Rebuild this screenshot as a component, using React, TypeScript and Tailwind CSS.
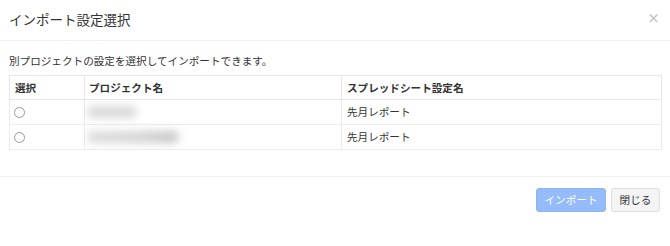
import React from 'react';

const rows = [
  { name: 'short', sheet: '先月レポート' },
  { name: 'long', sheet: '先月レポート' },
];

function BlurredName({ long }: { long: boolean }) {
  return (
    <div className="flex items-center h-full">
      <div
        className={`h-[12px] rounded-full blur-[4px] ${
          long ? 'w-[92px] bg-gradient-to-r from-[#dcdcdc] via-[#d6d6d6] to-[#c6c6c6]' : 'w-[50px] bg-[#d8d8d8]'
        }`}
      />
    </div>
  );
}

export default function App() {
  return (
    <div
      className="w-[670px] h-[246px] bg-white text-[#333]"
      style={{ fontFamily: '"Noto Sans CJK JP", "Noto Sans", sans-serif' }}
    >
      {/* Header */}
      <div className="h-[41px] flex items-center justify-between pl-[9px] pr-[10px] border-b border-[#efefef]">
        <h4 className="text-[13.5px] leading-none font-normal text-[#333]">インポート設定選択</h4>
        <span className="text-[13px] leading-none font-bold text-[#c4c4c4] -mt-[6px]">×</span>
      </div>

      {/* Body */}
      <div className="px-[9px] pt-[11px] pb-[26px]">
        <p className="text-[10.6px] leading-[17px] text-[#333]">別プロジェクトの設定を選択してインポートできます。</p>
        <table className="mt-[6px] w-[652px] border-collapse border border-[#e8e8e8] text-[10.6px] table-fixed">
          <colgroup>
            <col className="w-[75px]" />
            <col className="w-[257px]" />
            <col className="w-[320px]" />
          </colgroup>
          <thead>
            <tr className="h-[24px]">
              <th className="border border-[#e8e8e8] text-left font-bold pl-[5px]">選択</th>
              <th className="border border-[#e8e8e8] text-left font-bold pl-[4px]">プロジェクト名</th>
              <th className="border border-[#e8e8e8] text-left font-bold pl-[5px]">スプレッドシート設定名</th>
            </tr>
          </thead>
          <tbody>
            {rows.map((r, i) => (
              <tr key={i} className="h-[25px]">
                <td className="border border-[#ececec] pl-[4px]">
                  <div className="w-[11px] h-[11px] rounded-full border border-[#9a9a9a] bg-white" />
                </td>
                <td className="border border-[#ececec] pl-[2px] h-[25px]">
                  <BlurredName long={r.name === 'long'} />
                </td>
                <td className="border border-[#ececec] pl-[5px]">{r.sheet}</td>
              </tr>
            ))}
          </tbody>
        </table>
      </div>

      {/* Footer */}
      <div className="border-t border-[#f1f1f1] pt-[11px] pr-[10px] flex justify-end gap-[5px]">
        <button className="h-[24px] w-[70px] rounded-[3px] bg-[#95bcf9] border border-[#8db5f5] text-white text-[10.6px]">
          インポート
        </button>
        <button className="h-[24px] w-[49px] rounded-[3px] bg-[#f4f4f4] border border-[#dedede] text-[#333] text-[10.6px]">
          閉じる
        </button>
      </div>
    </div>
  );
}
